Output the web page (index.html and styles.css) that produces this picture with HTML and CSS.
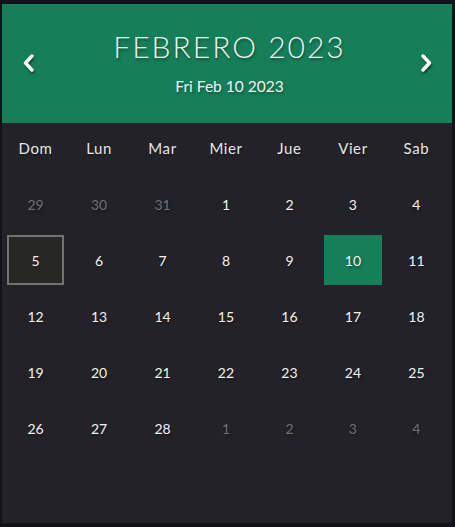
FILE: index.html
```html
<!DOCTYPE html>
<html lang="es">
<head>
    <meta charset="UTF-8">
    <meta name="viewport" content="width=device-width, initial-scale=1.0">
    <title>Calendario</title>
    <link rel="stylesheet" href="styles.css">
</head>
<body>
    <div class="calendar">
        <div class="header">
            <button class="nav prev" aria-label="Anterior">
                <svg width="14" height="18" viewBox="0 0 14 18"><path d="M10 2 L3.5 9 L10 16" fill="none" stroke="#fff" stroke-width="3.4" stroke-linecap="round" stroke-linejoin="round"/></svg>
            </button>
            <div class="title">
                <h1>FEBRERO 2023</h1>
                <p class="date">Fri Feb 10 2023</p>
            </div>
            <button class="nav next" aria-label="Siguiente">
                <svg width="14" height="18" viewBox="0 0 14 18"><path d="M4 2 L10.5 9 L4 16" fill="none" stroke="#fff" stroke-width="3.4" stroke-linecap="round" stroke-linejoin="round"/></svg>
            </button>
        </div>

        <div class="grid">
            <div class="weekday">Dom</div>
            <div class="weekday">Lun</div>
            <div class="weekday">Mar</div>
            <div class="weekday">Mier</div>
            <div class="weekday">Jue</div>
            <div class="weekday">Vier</div>
            <div class="weekday">Sab</div>

            <div class="day other">29</div>
            <div class="day other">30</div>
            <div class="day other">31</div>
            <div class="day">1</div>
            <div class="day">2</div>
            <div class="day">3</div>
            <div class="day">4</div>

            <div class="day hover">5</div>
            <div class="day">6</div>
            <div class="day">7</div>
            <div class="day">8</div>
            <div class="day">9</div>
            <div class="day today">10</div>
            <div class="day">11</div>

            <div class="day">12</div>
            <div class="day">13</div>
            <div class="day">14</div>
            <div class="day">15</div>
            <div class="day">16</div>
            <div class="day">17</div>
            <div class="day">18</div>

            <div class="day">19</div>
            <div class="day">20</div>
            <div class="day">21</div>
            <div class="day">22</div>
            <div class="day">23</div>
            <div class="day">24</div>
            <div class="day">25</div>

            <div class="day">26</div>
            <div class="day">27</div>
            <div class="day">28</div>
            <div class="day other">1</div>
            <div class="day other">2</div>
            <div class="day other">3</div>
            <div class="day other">4</div>
        </div>
    </div>
</body>
</html>
```

FILE: styles.css
```css
body {
    margin: 0;
    padding: 4px 3px 4px 2px;
    background-color: #12121a;
    font-family: 'Lato', 'Open Sans', sans-serif;
    color: #f2f2f2;
}
.calendar {
    background-color: #232228;
    height: 519px;
}
.header {
    height: 119px;
    background-color: #167f59;
    display: flex;
    align-items: center;
    justify-content: space-between;
    padding: 0 19px 0 20px;
    box-sizing: border-box;
}
.nav {
    background: none;
    border: none;
    padding: 0;
    margin-top: -2px;
    display: flex;
    cursor: pointer;
    filter: drop-shadow(1px 2px 1px rgba(0, 0, 0, 0.45));
}
.title {
    text-align: center;
    margin-left: 4px;
    margin-top: -3px;
}
h1 {
    margin: 0;
    font-size: 30px;
    font-weight: 300;
    letter-spacing: 2px;
    line-height: 36px;
    text-shadow: 1px 2px 3px rgba(0, 0, 0, 0.4);
}
.date {
    margin: 12px 0 0;
    font-size: 15.5px;
    line-height: 20px;
    text-shadow: 1px 2px 3px rgba(0, 0, 0, 0.35);
}
.grid {
    display: grid;
    grid-template-columns: repeat(7, 1fr);
    grid-auto-rows: 50px;
    column-gap: 6.3px;
    row-gap: 6px;
    padding: 0 7px 0 5px;
}
.weekday,
.day {
    display: flex;
    align-items: center;
    justify-content: center;
    box-sizing: border-box;
}
.weekday {
    font-size: 15px;
    letter-spacing: 0.6px;
    color: #e6e6e6;
    text-shadow: 1px 2px 2px rgba(0, 0, 0, 0.35);
}
.day {
    font-size: 14px;
    text-shadow: 1px 2px 2px rgba(0, 0, 0, 0.3);
}
.day.other {
    color: #707074;
}
.day.hover {
    border: 2px solid #727272;
    background-color: #272724;
}
.day.today {
    background-color: #167f59;
    text-shadow: 1px 2px 3px rgba(0, 0, 0, 0.45);
}
```
